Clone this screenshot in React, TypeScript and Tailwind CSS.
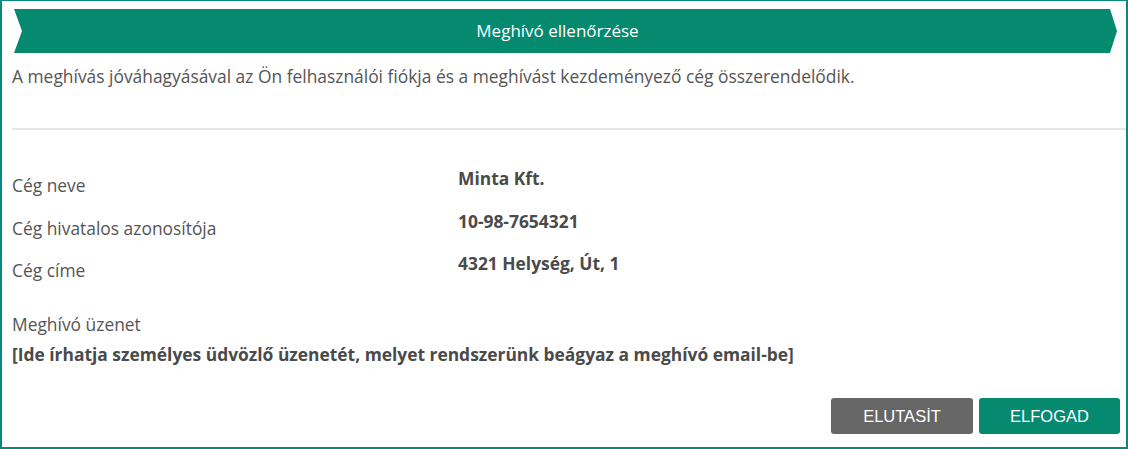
import React from 'react';

const rows = [
    { label: 'Cég neve', value: 'Minta Kft.' },
    { label: 'Cég hivatalos azonosítója', value: '10-98-7654321' },
    { label: 'Cég címe', value: '4321 Helység, Út, 1' },
];

export default function App() {
    return (
        <div className="w-[1128px] h-[449px] bg-white border-2 border-t border-[#07897d] font-['Open_Sans',sans-serif] text-[#555] flex flex-col">
            {/* Ribbon header */}
            <div className="pt-2 pl-3 pr-[9px]">
                <div className="h-[44px] bg-[#05896f] flex items-center justify-center text-[17px] text-white [clip-path:polygon(0_0,calc(100%-7px)_0,100%_50%,calc(100%-7px)_100%,0_100%,8px_50%)]">
                    <span className="pr-4">Meghívó ellenőrzése</span>
                </div>
            </div>

            <p className="px-[10px] pt-[12px] text-[17.4px] leading-[22px]">
                A meghívás jóváhagyásával az Ön felhasználói fiókja és a meghívást kezdeményező cég összerendelődik.
            </p>

            <div className="ml-[10px] mt-[41px] border-t-2 border-[#e6e6e6]" />

            {/* Company data */}
            <div className="px-[10px] pt-[36px] flex flex-col">
                {rows.map((r) => (
                    <div key={r.label} className="flex h-[42.5px]">
                        <div className="w-[446px] text-[17.4px] leading-[24px] pt-[7px]">{r.label}</div>
                        <div className="text-[17.4px] leading-[24px] font-bold text-[#4a4a4a]">{r.value}</div>
                    </div>
                ))}
            </div>

            <div className="px-[10px] pt-[18px]">
                <div className="text-[17.4px] leading-[24px]">Meghívó üzenet</div>
                <div className="text-[17.4px] leading-[24px] font-bold text-[#4a4a4a] mt-[6px]">
                    [Ide írhatja személyes üdvözlő üzenetét, melyet rendszerünk beágyaz a meghívó email-be]
                </div>
            </div>

            <div className="mt-auto pb-[13px] pr-[6px] flex justify-end gap-[6px]">
                <button className="w-[142px] h-[36px] rounded-[3px] bg-[#666666] text-white text-[16.5px] font-['Liberation_Sans',sans-serif]">
                    ELUTASİT
                </button>
                <button className="w-[141px] h-[36px] rounded-[3px] bg-[#05896f] text-white text-[16.5px] font-['Liberation_Sans',sans-serif]">
                    ELFOGAD
                </button>
            </div>
        </div>
    );
}
